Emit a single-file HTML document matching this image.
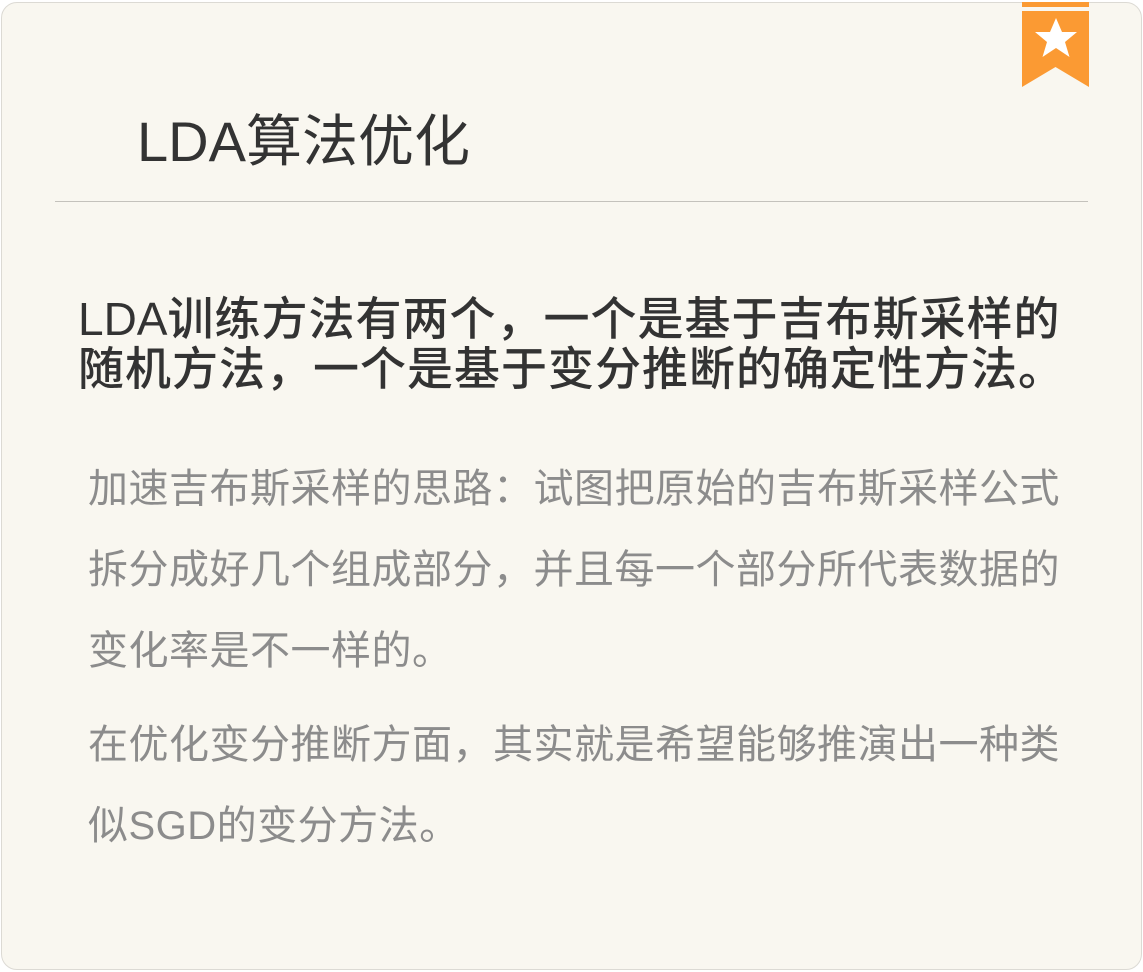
<!DOCTYPE html>
<html><head><meta charset="utf-8"><style>
html,body{margin:0;padding:0;width:1143px;height:972px;background:#fff;overflow:hidden}
.card{position:absolute;left:1px;top:2px;width:1139px;height:966px;background:#f9f7f0;border:1px solid #dcdad4;border-radius:16px}
.t{position:absolute;left:137px;top:102px;font:56px/80px "Liberation Sans","Noto Sans CJK SC",sans-serif;color:#333;white-space:nowrap}
.hr{position:absolute;left:55px;top:201px;width:1033px;height:1px;background:#c4c2bc}
.b{position:absolute;left:78px;top:294px;width:1010px;font:500 46px/50px "Liberation Sans","Noto Sans CJK SC",sans-serif;letter-spacing:1px;color:#333}
.b span{letter-spacing:0}
.g{position:absolute;left:88px;width:990px;font:40px/81px "Liberation Sans","Noto Sans CJK SC",sans-serif;letter-spacing:0.5px;color:#8c8c8c}
</style></head><body>
<div class="card"></div>
<svg style="position:absolute;left:1022px;top:2px" width="67" height="86" viewBox="0 0 67 86">
<rect x="0" y="0" width="67" height="5" fill="#fb9a33"/>
<polygon points="0,9 67,9 67,85 33.5,65 0,85" fill="#fb9a33"/>
<polygon points="34,16 40,30 55,30 43,40 47.5,55 34,46 20.5,55 25,40 13,30 28,30" fill="#fff"/>
</svg>
<div class="t">LDA算法优化</div>
<div class="hr"></div>
<div class="b"><span>LDA</span>训练方法有两个，一个是基于吉布斯采样的随机方法，一个是基于变分推断的确定性方法。</div>
<div class="g" style="top:449px">加速吉布斯采样的思路：试图把原始的吉布斯采样公式拆分成好几个组成部分，并且每一个部分所代表数据的变化率是不一样的。</div>
<div class="g" style="top:705px">在优化变分推断方面，其实就是希望能够推演出一种类似SGD的变分方法。</div>
</body></html>
